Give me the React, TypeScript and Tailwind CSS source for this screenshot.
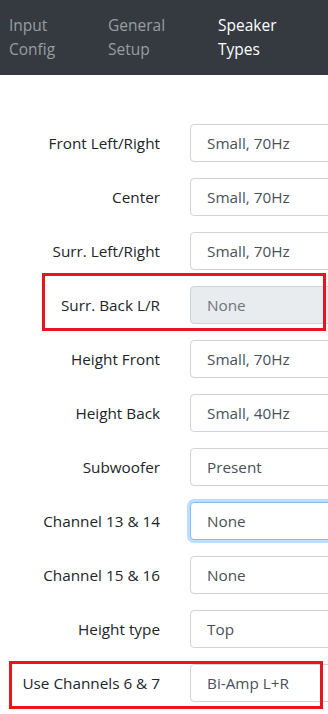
import React from 'react';

const rows = [
  { label: 'Front Left/Right', value: 'Small, 70Hz' },
  { label: 'Center', value: 'Small, 70Hz' },
  { label: 'Surr. Left/Right', value: 'Small, 70Hz' },
  { label: 'Surr. Back L/R', value: 'None', disabled: true },
  { label: 'Height Front', value: 'Small, 70Hz' },
  { label: 'Height Back', value: 'Small, 40Hz' },
  { label: 'Subwoofer', value: 'Present' },
  { label: 'Channel 13 & 14', value: 'None', focus: true },
  { label: 'Channel 15 & 16', value: 'None' },
  { label: 'Height type', value: 'Top' },
  { label: 'Use Channels 6 & 7', value: 'Bi-Amp L+R' },
];

export default function App() {
  return (
    <div className="relative w-[328px] h-[714px] overflow-hidden bg-white text-[15.3px]" style={{ fontFamily: '"Open Sans", "Noto Sans", sans-serif' }}>
      <nav className="flex bg-[#343a40] h-[75px] pt-[13px] leading-6 text-[15.5px]">
        <div className="w-[108px] pl-[9px] text-[#9a9da0]">Input<br />Config</div>
        <div className="w-[110px] text-[#9a9da0]">General<br />Setup</div>
        <div className="text-white">Speaker<br />Types</div>
      </nav>

      <div className="flex flex-col gap-4 pt-[49px]">
        {rows.map((r) => (
          <div key={r.label} className="flex items-center">
            <div className="w-[160px] shrink-0 text-right text-[#212529]">{r.label}</div>
            <div
              className={
                'ml-[30px] w-[160px] shrink-0 h-[38px] flex items-center pl-[16px] rounded-[4px] border ' +
                (r.disabled
                  ? 'bg-[#e9ecef] border-[#ced4da] text-[#6c757d]'
                  : r.focus
                  ? 'bg-white border-[#80bdff] shadow-[0_0_0_3px_rgba(0,123,255,0.25)] text-[#495057]'
                  : 'bg-white border-[#ced4da] text-[#495057]')
              }
            >
              {r.value}
            </div>
          </div>
        ))}
      </div>

      <div className="absolute left-[42px] top-[273px] w-[284px] h-[58px] border-[3px] border-[#e8141f]" />
      <div className="absolute left-[9px] top-[661px] w-[314px] h-[48px] border-[3px] border-[#e8141f]" />
    </div>
  );
}
